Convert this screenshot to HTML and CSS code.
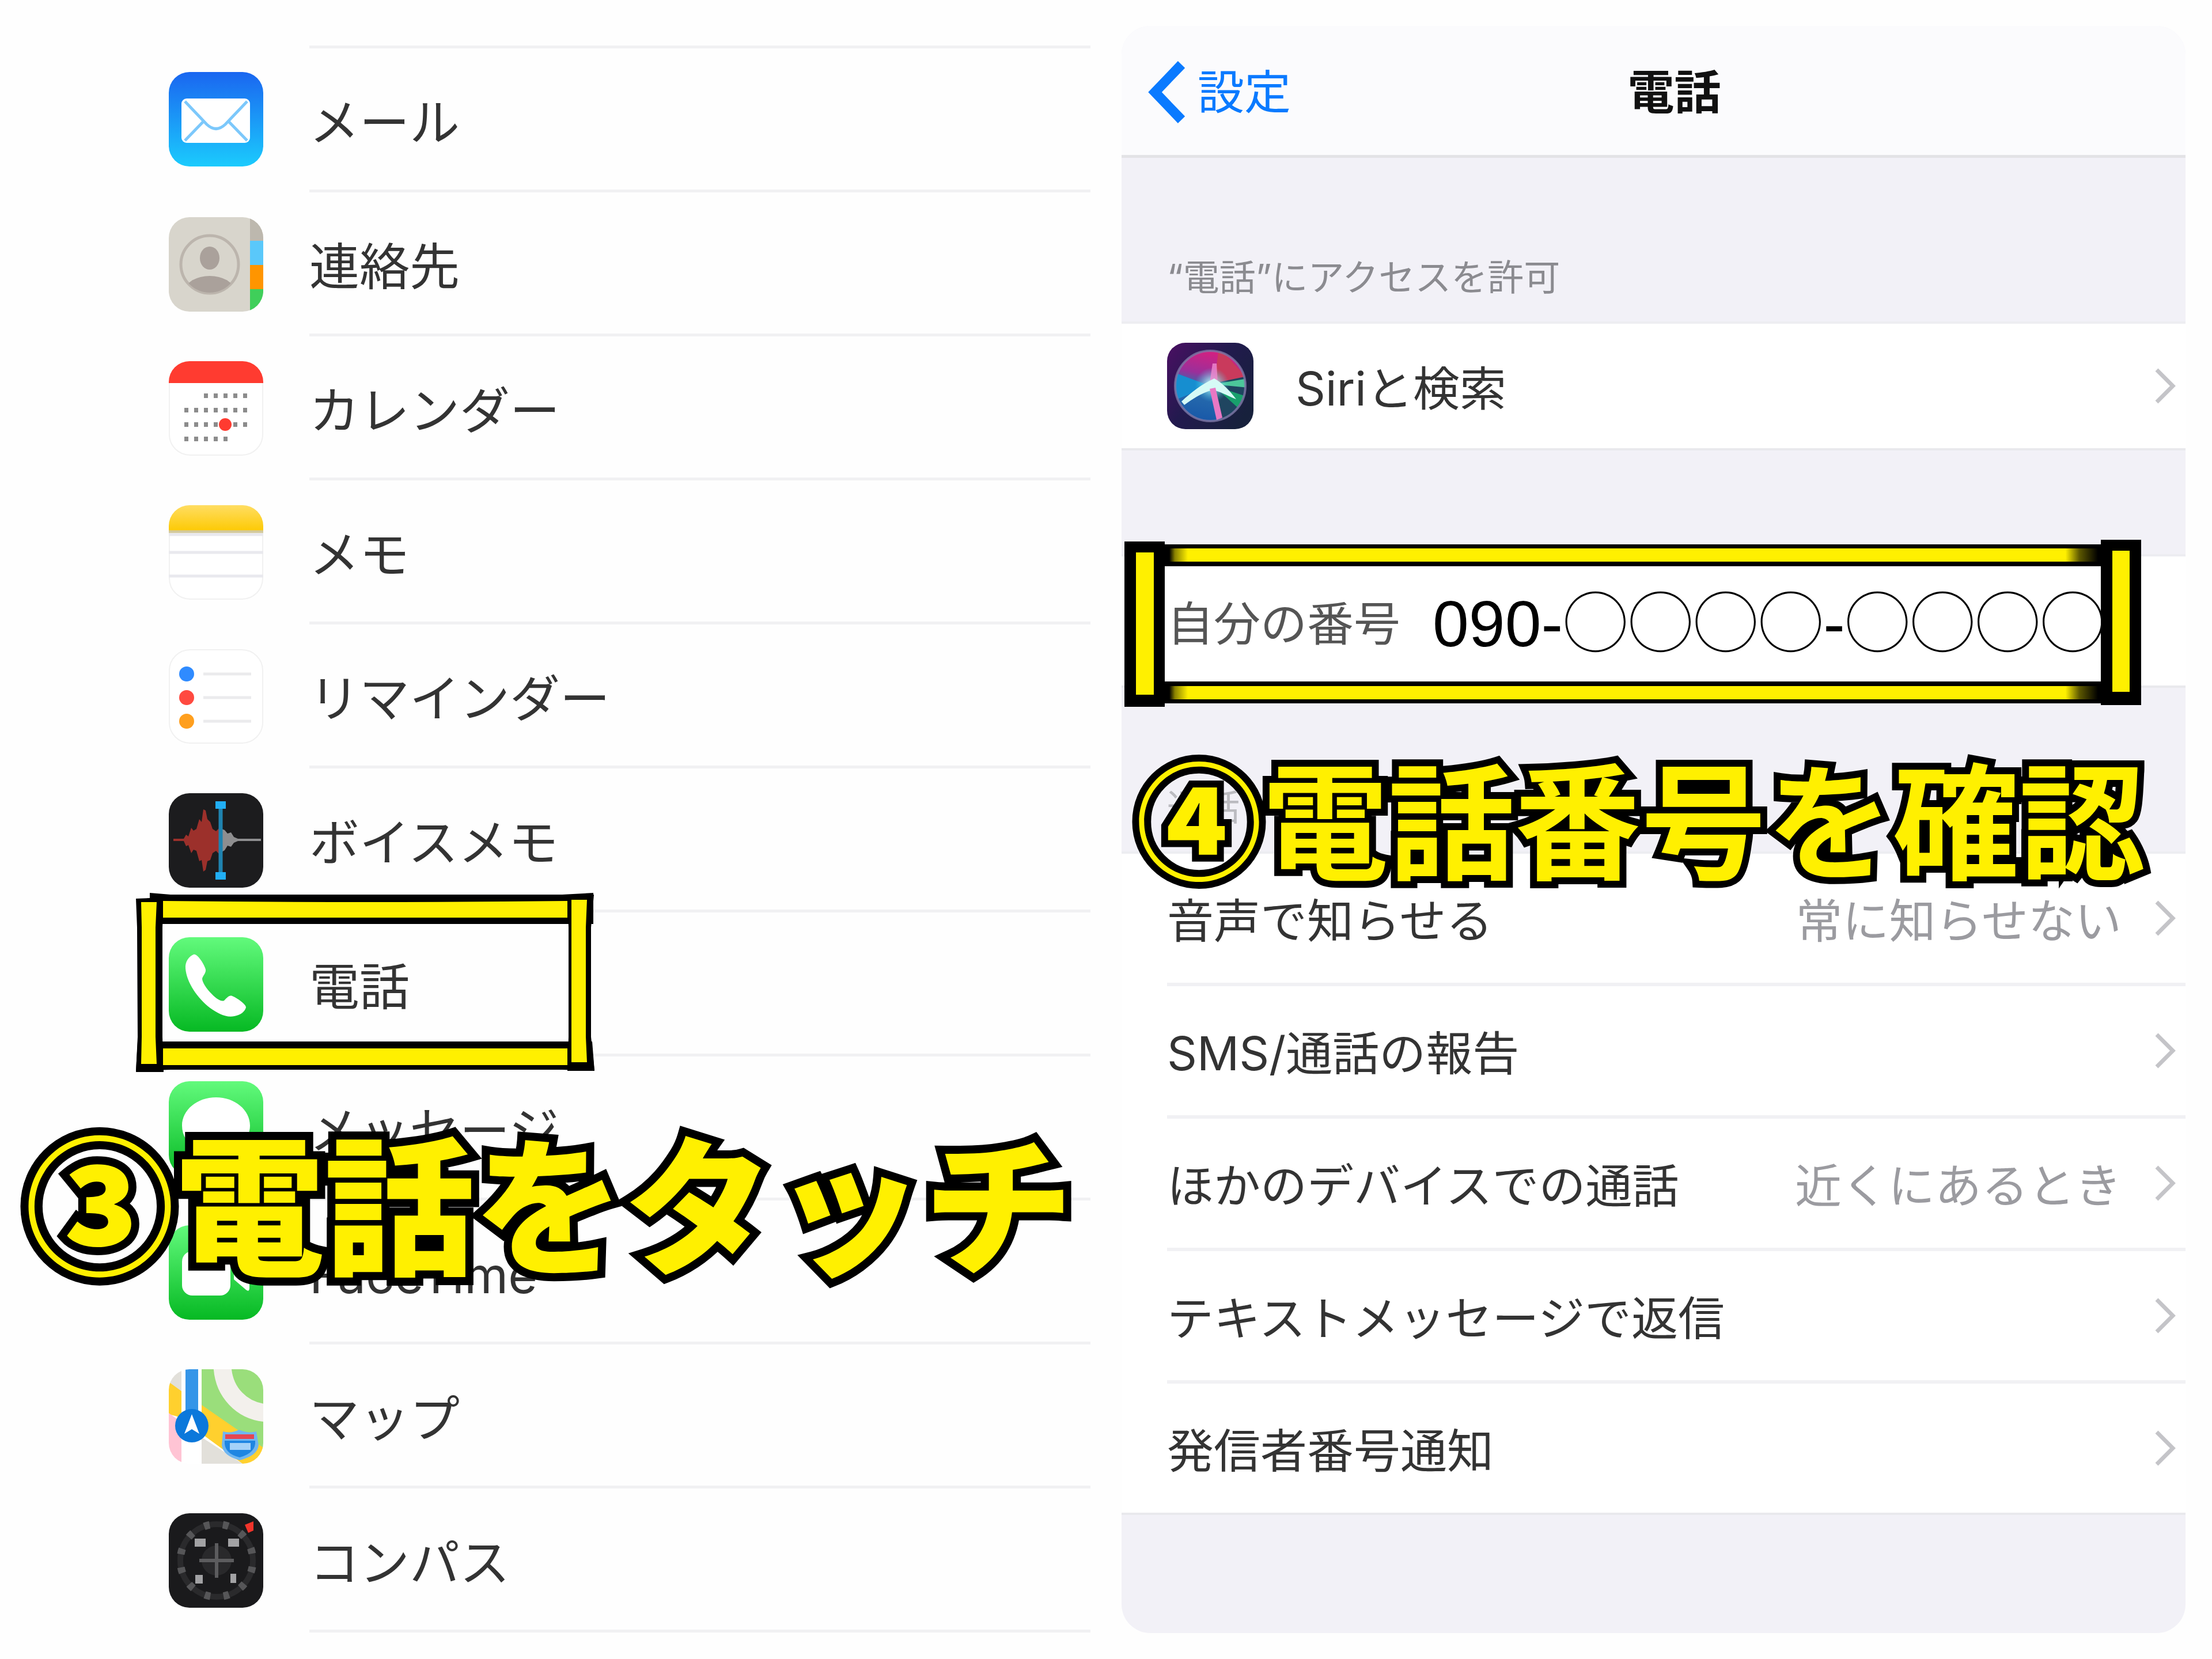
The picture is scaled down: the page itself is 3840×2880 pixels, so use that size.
FILE: index.html
```html
<!DOCTYPE html>
<html lang="ja">
<head>
  <meta charset="UTF-8" />
  <meta name="viewport" content="width=device-width, initial-scale=1.0"/>
  <title>電話番号の確認方法</title>
  <link rel="stylesheet" href="styles.css">
</head>
<body>
  <main class="guide">

    <!-- step 3: settings list -->
    <section class="panel-left">
      <ul class="app-list">
        <li class="app-row">
          <svg class="app-icon" viewBox="0 0 164 164">
            <defs><linearGradient id="mailBg" x1="0" y1="0" x2="0" y2="1"><stop offset="0" stop-color="#1a66f0"/><stop offset="1" stop-color="#1bcbfd"/></linearGradient></defs>
            <rect width="164" height="164" rx="36" fill="url(#mailBg)"/>
            <rect x="22" y="46" width="119" height="77" rx="9" fill="#fff"/>
            <g fill="none" stroke="#7cc8fb" stroke-width="5">
              <path d="M28 51 L66 91 Q82 106 98 91 L136 51"/>
              <path d="M28 119 L60 86 M136 119 L104 86"/>
            </g>
          </svg>
          <a class="app-name" href="#">メール</a>
        </li>
        <li class="app-row">
          <svg class="app-icon" viewBox="0 0 164 164">
            <clipPath id="tile"><rect width="164" height="164" rx="36"/></clipPath>
            <clipPath id="face"><circle cx="71" cy="82" r="49"/></clipPath>
            <g clip-path="url(#tile)">
              <rect width="164" height="164" fill="#d8d5cc"/>
              <rect x="141" width="23" height="41" fill="#bdb8ae"/>
              <rect x="141" y="41" width="23" height="42" fill="#5ac8fa"/>
              <rect x="141" y="83" width="23" height="42" fill="#ff9500"/>
              <rect x="141" y="125" width="23" height="39" fill="#3fcf5a"/>
            </g>
            <circle cx="71" cy="82" r="50" fill="none" stroke="#bcb5ad" stroke-width="5"/>
            <ellipse cx="71" cy="71" rx="17" ry="20" fill="#aaa19b"/>
            <ellipse cx="71" cy="127" rx="42" ry="25" fill="#aaa19b" clip-path="url(#face)"/>
          </svg>
          <a class="app-name" href="#">連絡先</a>
        </li>
        <li class="app-row">
          <svg class="app-icon" viewBox="0 0 164 164">
            <rect x="1" y="1" width="162" height="162" rx="36" fill="#fff" stroke="#f1f1f1" stroke-width="2"/>
            <path d="M0 38 V36 A36 36 0 0 1 36 0 H128 A36 36 0 0 1 164 36 V38 Z" fill="#ff3b30"/>
            <g fill="none" stroke="#8c8c8c" stroke-width="8" stroke-dasharray="7 10">
              <path d="M61 60 H136"/>
              <path d="M27 85 H136"/>
              <path d="M27 110 H136"/>
              <path d="M27 135 H102"/>
            </g>
            <circle cx="98" cy="110" r="11" fill="#ff3b30"/>
          </svg>
          <a class="app-name" href="#">カレンダー</a>
        </li>
        <li class="app-row">
          <svg class="app-icon" viewBox="0 0 164 164">
            <defs><linearGradient id="memoBg" x1="0" y1="0" x2="0" y2="1"><stop offset="0" stop-color="#ffdd62"/><stop offset="1" stop-color="#fdca05"/></linearGradient></defs>
            <rect x="1" y="1" width="162" height="162" rx="36" fill="#fff" stroke="#f1f1f1" stroke-width="2"/>
            <path d="M0 44 V36 A36 36 0 0 1 36 0 H128 A36 36 0 0 1 164 36 V44 Z" fill="url(#memoBg)"/>
            <path d="M0 46 H164" stroke="#d3c99c" stroke-width="5"/>
            <path d="M0 51 H164 M0 82 H164 M0 123 H164" stroke="#e9e9ee" stroke-width="5"/>
          </svg>
          <a class="app-name" href="#">メモ</a>
        </li>
        <li class="app-row">
          <svg class="app-icon" viewBox="0 0 164 164">
            <rect x="1" y="1" width="162" height="162" rx="36" fill="#fff" stroke="#f1f1f1" stroke-width="2"/>
            <circle cx="31" cy="43" r="13" fill="#2f8bff"/>
            <circle cx="31" cy="84" r="13" fill="#ff4a40"/>
            <circle cx="31" cy="125" r="13" fill="#ff9f1e"/>
            <path d="M60 43 H143 M60 84 H143 M60 125 H143" stroke="#ebebed" stroke-width="5"/>
          </svg>
          <a class="app-name" href="#">リマインダー</a>
        </li>
        <li class="app-row">
          <svg class="app-icon" viewBox="0 0 164 164">
            <rect width="164" height="164" rx="36" fill="#1c1c1e"/>
            <path d="M8 79 H26 L30 72 L34 75 L39 60 L43 65 L48 62 L53 45 L57 50 L60 28 L64 30 L67 45 L72 50 L76 62 L82 66 L88 60 V106 L82 100 L76 104 L72 116 L67 118 L64 133 L60 136 L57 116 L53 118 L48 100 L43 98 L39 104 L34 90 L30 92 L26 83 H8 Z" fill="#9c302b"/>
            <path d="M92 62 L97 64 L102 70 L108 68 L113 76 L120 79 H160 V83 H120 L113 86 L108 93 L102 91 L97 99 L92 102 Z" fill="#8e8e90"/>
            <path d="M90 14 V150" stroke="#1f83b0" stroke-width="7"/>
            <path d="M81 14 H99 V27 H81 Z M81 137 H99 V150 H81 Z" fill="#21aef5"/>
          </svg>
          <a class="app-name" href="#">ボイスメモ</a>
        </li>
        <li class="app-row is-target">
          <svg class="app-icon" viewBox="0 0 164 164">
            <defs><linearGradient id="green" x1="0" y1="0" x2="0" y2="1"><stop offset="0" stop-color="#62fa7c"/><stop offset="1" stop-color="#06b923"/></linearGradient></defs>
            <rect width="164" height="164" rx="36" fill="url(#green)"/>
            <path d="M43 30 C35 33 28 43 29 54 C31 79 50 106 72 123 C86 133 100 140 114 137 C125 135 132 129 134 122 C135 117 118 105 110 102 C105 100 101 105 96 110 C91 112 84 108 75 99 C65 89 58 78 58 72 C59 67 65 62 64 56 C62 48 50 28 43 30 Z" fill="#fff"/>
          </svg>
          <a class="app-name" href="#">電話</a>

          <svg class="frame frame-phone" viewBox="0 0 796 310">
            <path d="M24 0 L60 3 H740 L794 0 V54 H24 Z M3 258 H792 L796 309 L740 307 H60 L0 309 Z" fill="#000"/>
            <path d="M0 10 L48 8 L46 60 L46 250 L48 311 L0 311 L3 250 L2 60 Z" fill="#000"/>
            <path d="M749 6 L795 3 L790 60 V250 L796 309 L749 309 L751 250 V60 Z" fill="#000"/>
            <path d="M47 14 Q400 18 749 14 V43 H47 Z M47 270 H749 V299 H47 Z" fill="#fff000"/>
            <path d="M9 16 H36 L34 60 V250 L36 297 H9 L10 250 V60 Z M756 12 H783 L781 60 V250 L783 294 H756 Z" fill="#fff000"/>
          </svg>
          <p class="caption caption-touch">③電話をタッチ</p>
        </li>
        <li class="app-row">
          <svg class="app-icon" viewBox="0 0 164 164">
            <rect width="164" height="164" rx="36" fill="url(#green)"/>
            <path d="M82 28 C115 28 141 50 141 77 C141 104 115 126 82 126 C76 126 70 125 65 124 C58 131 48 135 38 135 C44 130 47 124 47 117 C32 108 23 94 23 77 C23 50 49 28 82 28 Z" fill="#fff"/>
          </svg>
          <a class="app-name" href="#">メッセージ</a>
        </li>
        <li class="app-row">
          <svg class="app-icon" viewBox="0 0 164 164">
            <rect width="164" height="164" rx="36" fill="url(#green)"/>
            <rect x="23" y="45" width="84" height="77" rx="18" fill="#fff"/>
            <path d="M113 73 L134 54 Q140 50 140 58 V108 Q140 117 134 112 L113 94 Z" fill="#fff"/>
          </svg>
          <a class="app-name" href="#">FaceTime</a>
        </li>
        <li class="app-row">
          <svg class="app-icon" viewBox="0 0 164 164">
            <g clip-path="url(#tile)">
              <rect width="164" height="164" fill="#fff"/>
              <path d="M0 0 H22 V50 L0 25 Z" fill="#e2e0da"/>
              <path d="M0 22 L22 38 V84 L0 78 Z" fill="#ffd02e"/>
              <path d="M0 76 L22 92 V164 H0 Z" fill="#ffc4d4"/>
              <path d="M57 0 H164 V140 L57 66 Z" fill="#9ade7b"/>
              <path d="M57 62 L164 136 V164 H128 L57 112 Z" fill="#ffd02e"/>
              <path d="M57 118 L128 164 H57 Z" fill="#e2e0da"/>
              <path d="M93 -10 C93 40 128 74 172 76" fill="none" stroke="#f3f0ec" stroke-width="31"/>
              <path d="M40 0 V80" stroke="#3595e8" stroke-width="22"/>
              <circle cx="40" cy="98" r="29" fill="#0b78db"/>
              <path d="M40 78 L53 112 L40 104 L27 112 Z" fill="#fff"/>
              <path d="M94 108 Q108 112 122 105 Q138 112 152 108 L156 132 Q154 150 123 158 Q94 150 92 132 Z" fill="#70b6f0"/>
              <path d="M98 113 H148 V121 H98 Z" fill="#e54652"/>
              <path d="M97 124 H150 Q152 145 123 153 Q95 146 97 124 Z" fill="#1f86e2"/>
              <path d="M106 134 H142" stroke="#a5d2f8" stroke-width="12"/>
            </g>
          </svg>
          <a class="app-name" href="#">マップ</a>
        </li>
        <li class="app-row">
          <svg class="app-icon" viewBox="0 0 164 164">
            <rect width="164" height="164" rx="36" fill="#1a1a1c"/>
            <circle cx="83" cy="82" r="63" fill="none" stroke="#2a2a2c" stroke-width="10"/>
            <circle cx="83" cy="82" r="63" fill="none" stroke="#565658" stroke-width="13" pathLength="360" stroke-dasharray="9 21" stroke-dashoffset="-10"/>
            <circle cx="83" cy="82" r="26" fill="#29292b"/>
            <path d="M83 52 V112 M53 82 H113" stroke="#5c5c5e" stroke-width="6"/>
            <path d="M45 44 H64 V58 H45 Z M103 44 H122 V58 H103 Z M46 107 H59 V122 H46 Z M107 105 H117 V121 H107 Z" fill="#a2a2a4"/>
            <path d="M132 20 L147 14 L147 30 L138 34 Z" fill="#f0342b"/>
          </svg>
          <a class="app-name" href="#">コンパス</a>
        </li>
      </ul>
    </section>

    <!-- step 4: phone settings -->
    <section class="panel-right">
      <header class="nav-bar">
        <a class="back" href="#">
          <svg class="back-arrow" viewBox="0 0 66 110"><path d="M58 7 L12 55 L58 103" fill="none" stroke="#0a7aff" stroke-width="17"/></svg>
          設定
        </a>
        <h1>電話</h1>
      </header>

      <h2 class="group-title">“電話”にアクセスを許可</h2>
      <div class="group">
        <a class="row row-siri" href="#">
          <svg class="siri-icon" viewBox="0 0 150 150">
            <defs>
              <linearGradient id="siriBg" x1="0" y1="0" x2="1" y2="0.7"><stop offset="0" stop-color="#4b0f63"/><stop offset="0.5" stop-color="#221a4e"/><stop offset="1" stop-color="#17213c"/></linearGradient>
              <linearGradient id="siriOrb" x1="0.6" y1="0" x2="0.4" y2="1"><stop offset="0" stop-color="#d81f7e"/><stop offset="0.35" stop-color="#9b2f9a"/><stop offset="0.55" stop-color="#2a6fae"/><stop offset="1" stop-color="#1858a8"/></linearGradient>
              <radialGradient id="siriGlow"><stop offset="0" stop-color="#fff"/><stop offset="0.35" stop-color="#a9eff5" stop-opacity="0.7"/><stop offset="1" stop-color="#3fc6e0" stop-opacity="0"/></radialGradient>
              <clipPath id="orb"><circle cx="75" cy="75" r="61"/></clipPath>
            </defs>
            <rect width="150" height="150" rx="32" fill="url(#siriBg)"/>
            <circle cx="75" cy="75" r="61" fill="url(#siriOrb)"/>
            <g clip-path="url(#orb)">
              <path d="M82 70 L90 8 L140 62 Z" fill="#c93a5c"/>
              <path d="M82 70 L140 58 V120 L95 140 Z" fill="#1f4560"/>
              <path d="M80 72 L140 62 V78 Z" fill="#4cc79a"/>
              <path d="M80 74 L134 92 L122 112 Z" fill="#18a06c"/>
              <path d="M75 75 L8 50 L12 100 Z" fill="#168ed0"/>
            </g>
            <circle cx="75" cy="75" r="61" fill="none" stroke="#7f78a6" stroke-width="4" stroke-opacity="0.8"/>
            <circle cx="78" cy="73" r="30" fill="url(#siriGlow)"/>
            <path d="M79 36 H86 L88 70 H74 Z" fill="#f08ad0" fill-opacity="0.8"/>
            <path d="M82 62 C96 70 108 82 120 98 C104 92 92 84 78 82 C58 88 44 98 30 108 L25 102 C42 86 60 72 82 62 Z" fill="#d6fbf6"/>
            <path d="M74 80 L84 78 L96 130 L86 134 Z" fill="#e978c4"/>
          </svg>
          <span class="label">Siriと検索</span>
          <svg class="chevron" viewBox="0 0 38 64"><path d="M4 4 L32 32 L4 60" fill="none" stroke="#c4c4c8" stroke-width="7"/></svg>
        </a>
      </div>

      <div class="group group-number">
        <div class="row">
          <span class="label my-number">自分の番号</span>
          <span class="number">090-<span class="mask">◯◯◯◯</span>-<span class="mask">◯◯◯◯</span></span>
        </div>
        <svg class="frame frame-number" viewBox="0 0 1765 290">
          <defs>
            <linearGradient id="rail" x1="0" y1="0" x2="1" y2="0">
              <stop offset="0" stop-color="#000"/>
              <stop offset="0.006" stop-color="#8a8200"/>
              <stop offset="0.02" stop-color="#fff000"/>
              <stop offset="0.965" stop-color="#fff000"/>
              <stop offset="0.98" stop-color="#5d5800"/>
              <stop offset="1" stop-color="#000"/>
            </linearGradient>
          </defs>
          <path d="M60 8 H1705 V46 H60 Z M60 246 H1705 V284 H60 Z" fill="#000"/>
          <path d="M78 15 H1690 V38 H78 Z M78 254 H1690 V277 H78 Z" fill="url(#rail)"/>
          <path d="M0 3 H70 V290 H0 Z M1695 0 H1765 V287 H1695 Z" fill="#000"/>
          <path d="M20 22 H51 V269 H20 Z M1715 19 H1745 V264 H1715 Z" fill="#fff000"/>
        </svg>
        <p class="caption caption-check"><span class="step">④</span>電話番号を確認</p>
      </div>

      <h2 class="group-title is-faded">通話</h2>
      <div class="group">
        <a class="row" href="#">
          <span class="label">音声で知らせる</span>
          <span class="value">常に知らせない</span>
          <svg class="chevron" viewBox="0 0 38 64"><path d="M4 4 L32 32 L4 60" fill="none" stroke="#c4c4c8" stroke-width="7"/></svg>
        </a>
        <a class="row" href="#">
          <span class="label">SMS/通話の報告</span>
          <svg class="chevron" viewBox="0 0 38 64"><path d="M4 4 L32 32 L4 60" fill="none" stroke="#c4c4c8" stroke-width="7"/></svg>
        </a>
        <a class="row" href="#">
          <span class="label">ほかのデバイスでの通話</span>
          <span class="value">近くにあるとき</span>
          <svg class="chevron" viewBox="0 0 38 64"><path d="M4 4 L32 32 L4 60" fill="none" stroke="#c4c4c8" stroke-width="7"/></svg>
        </a>
        <a class="row" href="#">
          <span class="label">テキストメッセージで返信</span>
          <svg class="chevron" viewBox="0 0 38 64"><path d="M4 4 L32 32 L4 60" fill="none" stroke="#c4c4c8" stroke-width="7"/></svg>
        </a>
        <a class="row" href="#">
          <span class="label">発信者番号通知</span>
          <svg class="chevron" viewBox="0 0 38 64"><path d="M4 4 L32 32 L4 60" fill="none" stroke="#c4c4c8" stroke-width="7"/></svg>
        </a>
      </div>
    </section>

  </main>
</body>
</html>
```
FILE: styles.css
```css
:root {
  --text: #333333;
  --muted: #9b9ba0;
  --blue: #0a7aff;
  --line: #f1f1f3;
  --panel: #f2f1f7;
  --mark: #fff000;
}

* {
  box-sizing: border-box;
}

body {
  margin: 0;
  background: #fefefe;
  color: var(--text);
  font-family: Inter, "Noto Sans CJK JP", sans-serif;
}

a {
  color: inherit;
  text-decoration: none;
}

.guide {
  display: grid;
  grid-template-columns: 1893fr 1847fr;
  column-gap: 54px;
  padding: 45px 46px 46px 0;
}

/* left: list of apps */
.app-list {
  list-style: none;
  margin: 0;
  padding: 34px 0 0 293px;
}

.app-row {
  position: relative;
  display: flex;
  align-items: center;
  gap: 80px;
  height: 250px;
}

.app-row:first-child {
  height: 255px;
}

.app-row:first-child .app-name {
  border-top: 5px solid var(--line);
}

.app-icon {
  flex: none;
  width: 164px;
  height: 164px;
}

.app-name {
  flex: 1;
  display: flex;
  align-items: center;
  height: 100%;
  padding-top: 14px;
  border-bottom: 5px solid var(--line);
  font-size: 87px;
  line-height: 100px;
}

.is-target {
  z-index: 1;
}

/* yellow marks over the screens */
.frame {
  position: absolute;
  overflow: visible;
}

.frame-phone {
  top: -34px;
  left: -57px;
  width: 796px;
  height: 310px;
}

.frame-number {
  top: -29px;
  left: 5px;
  width: 1765px;
  height: 290px;
}

.caption {
  position: absolute;
  margin: 0;
  color: var(--mark);
  font-family: "Noto Sans CJK JP", sans-serif;
  line-height: 1;
  white-space: nowrap;
  paint-order: stroke fill;
}

.caption-touch {
  top: 366px;
  left: -250px;
  font-size: 260px;
  font-weight: 900;
  -webkit-text-stroke: 28px #000;
}

.caption-check {
  top: 339px;
  left: 25px;
  font-size: 219px;
  font-weight: 700;
  -webkit-text-stroke: 24px #000;
}

.step {
  font-weight: 900;
}

/* right: phone settings */
.panel-right {
  background: var(--panel);
  border-radius: 50px;
  padding-bottom: 205px;
}

.nav-bar {
  display: grid;
  grid-template-columns: 1fr auto 1fr;
  align-items: center;
  height: 229px;
  padding: 6px 0 0 46px;
  background: #fbfbfd;
  border-bottom: 5px solid #e3e3e6;
  border-radius: 50px 50px 0 0;
  font-size: 81px;
  line-height: 100px;
}

.back {
  display: flex;
  align-items: center;
  gap: 20px;
  color: var(--blue);
}

.back-arrow {
  width: 66px;
  height: 110px;
}

.nav-bar h1 {
  margin: 0 0 0 26px;
  color: #111;
  font-size: 81px;
  font-weight: 700;
}

.group-title {
  margin: 0;
  padding: 167px 79px 37px;
  color: #8b8b90;
  font-size: 63px;
  font-weight: 400;
  line-height: 80px;
}

.is-faded {
  color: #bbbbc0;
}

.group {
  position: relative;
  background: #fff;
  border-top: 4px solid #ededf1;
  border-bottom: 4px solid #e9e9ed;
}

.group-number {
  z-index: 1;
  margin-top: 180px;
}

.row {
  display: flex;
  align-items: center;
  height: 230px;
  margin-left: 79px;
  padding-right: 16px;
  border-bottom: 6px solid #f1f1f4;
  font-size: 81px;
  line-height: 100px;
}

.row:last-child,
.group-number .row {
  height: 224px;
  border-bottom: none;
}

.row.row-siri {
  height: 216px;
}

.siri-icon {
  width: 150px;
  height: 150px;
  margin-right: 73px;
}

.label,
.value {
  padding-top: 10px;
}

.label {
  flex: 1;
}

.value {
  margin-right: 57px;
  color: var(--muted);
}

.chevron {
  width: 38px;
  height: 64px;
}

.my-number {
  flex: none;
  margin-right: 56px;
  color: #555;
}

.number {
  color: #000;
  font-family: "Liberation Sans", "Noto Sans CJK JP", sans-serif;
  font-size: 113px;
  white-space: nowrap;
}

.mask {
  font-family: "Noto Sans CJK JP", sans-serif;
  font-weight: 300;
}
```
